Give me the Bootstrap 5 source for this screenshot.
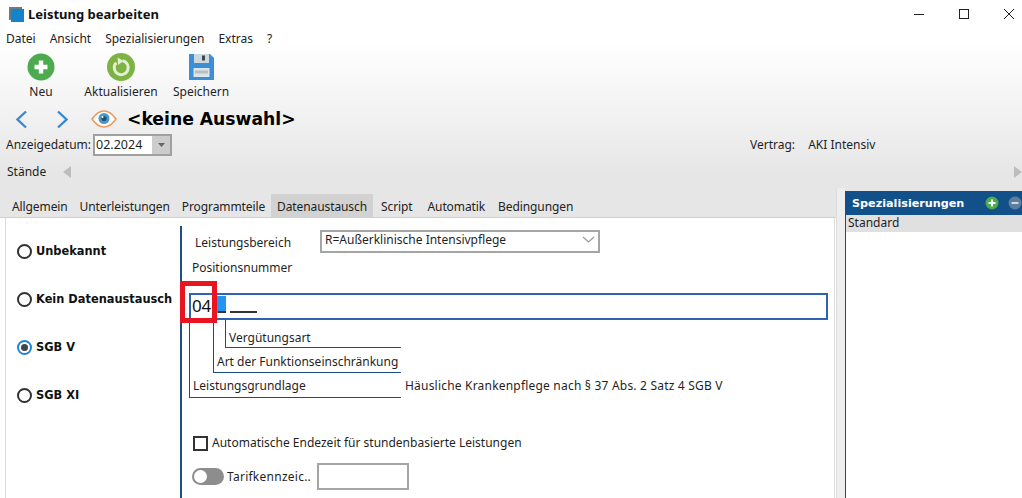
<!DOCTYPE html>
<html lang="de">
<head>
<meta charset="utf-8">
<title>Leistung bearbeiten</title>
<link href="https://cdn.jsdelivr.net/npm/bootstrap@5.3.0/dist/css/bootstrap.min.css" rel="stylesheet">
<style>
html,body{height:498px;overflow:hidden}
body{font-family:"Noto Sans","DejaVu Sans",sans-serif;font-size:12px;line-height:16px;color:#1f1f1f;background:#fff}
.appwin{width:1022px;height:498px;position:relative;overflow:hidden}
.chrome{height:218px;background:linear-gradient(#fff 0,#fff 42px,#e6e6e6 175px,#e6e6e6 100%);position:absolute;inset:0 0 auto 0}
.layer{position:relative}
.titlebar{height:27px;padding-left:9px}
.wintitle{font-weight:700;font-size:13px;margin-left:3px;color:#111}
.winbtns{margin-left:auto;gap:33px;padding-right:7px}
.menurow{height:24px;padding-left:6px;gap:14px;color:#222}
.toolrow{height:52px;padding-top:2px}
.toolitem{display:flex;flex-direction:column;align-items:center;gap:3px}
.ti1{width:70px;margin-left:6px}.ti2{width:88px;margin-left:1px}.ti3{width:62px;margin-left:5px}
.toolrow svg{display:block;height:28px}
.navrow{height:32px;padding-left:15px}
.nextarrow{margin-left:28px}
.eyeicon{margin-left:22px}
.heading{font-family:"DejaVu Sans",sans-serif;font-weight:700;font-size:17.2px;margin-left:10px;color:#000;line-height:24px}
.daterow{height:24px;padding-left:6px;margin-top:-2px}
.datebox{width:79px;height:22px;border:2px solid #a0a0a0;background:#fff;margin-left:2px;display:flex;align-items:center;padding-left:1px;font-size:12.5px}
.datearrow{margin-left:auto;width:18px;height:100%;background:#ccc;display:flex;align-items:center;justify-content:center}
.vertrag{margin-left:auto;width:272px}
.vertrag span:first-child{margin-right:10px}
.staenderow{height:34px;padding-left:7px;margin-top:-2px}
.leftpager{margin-left:17px}
.pagerow{position:absolute;left:0;right:0;top:194px;bottom:0;display:flex}
.leftside{width:835px;display:flex;flex-direction:column}
.tabstrip{height:24px;padding-left:6px;align-items:flex-end;border-bottom:1px solid #d0d0d0;letter-spacing:-.1px}
.tabitem{padding:0 6px;height:23px;line-height:26px;color:#222}
.tabsel{background:#d2d2d2;height:23px;padding:0 6px;line-height:25px}
.tabitem.tabgap1{padding-left:8px}
.tabitem.tabgap2{padding-left:9px}
.tabitem.tabgap3{padding-left:7px}
.tabpane{flex:1;background:#fff;margin-left:5px;display:flex;border-left:1px solid #ddd;border-right:1px solid #ddd}
.radios{flex:none;width:174px;padding:25px 0 0 11px;display:flex;flex-direction:column;gap:32px;font-family:"DejaVu Sans",sans-serif;font-weight:700;font-size:11.4px;color:#111}
.radioline{display:flex;align-items:center;gap:4px;height:16px;white-space:nowrap}
.rdot{width:15px;height:15px;border-radius:50%;border:2px solid #333;flex:none;display:flex;align-items:center;justify-content:center;background:#fff}
.rdot.active{border-color:#1a86d8}
.rdot.active::after{content:"";width:7px;height:7px;border-radius:50%;background:#444}
.formarea{flex:1;border-left:2px solid #1b4f80;margin-top:8px;padding-left:7px;position:relative}
.lineone{height:22px;margin-top:4px}
.lblone{margin-left:6px;width:125px;margin-top:4px}
.selbox{width:280px;height:23px;border:2px solid #a5a5a5;background:#fff;display:flex;align-items:center;padding-left:3px;padding-bottom:3px}
.selbox svg{margin-left:auto;margin-right:3px}
.lbltwo{margin:8px 0 0 3px}
.posinput{height:27px;border:2px solid #2f62b5;margin-top:17px;display:flex;align-items:flex-start;background:#fff;font-size:17px;line-height:22px;padding-left:1px;width:639px}
.seg1{font-size:17px;color:#111;width:25px;letter-spacing:-.3px}
.seg2{width:9px;height:17px;background:#2196f3;margin-top:1px}
.seg2u{width:8px;border-bottom:2px solid #333;height:18px;margin-left:-8px;position:relative}
.seg3{width:27px;height:18px;border-bottom:2px solid #333;margin-left:4px}
.treebox{width:212px;border-left:1px solid #1b4f80;border-bottom:1px solid #1b4f80}
.treebox .treebox{margin-left:auto}
.t2{width:188px}.t3{width:176px}
.treelabel{height:24px;line-height:26px;white-space:nowrap;padding-left:3px}
.t2 > .treelabel{line-height:28px}
.t3 > .treelabel{height:27px;line-height:36px}
.treerow{align-items:flex-end}
.grundlage{margin-left:4px;margin-bottom:4px;letter-spacing:.2px}
.checkline{margin-top:37px;margin-left:4px;gap:4px}
.ckbox{width:15px;height:15px;border:2px solid #333;background:#fff}
.switchline{margin-top:12px;margin-left:3px}
.togg{width:32px;height:17px;border-radius:9px;background:#8d8d8d;position:relative;margin-right:3px;flex:none}
.togg::after{content:"";position:absolute;left:2px;top:2px;width:13px;height:13px;border-radius:50%;background:#fff}
.tariflbl{letter-spacing:.25px}
.tarifbox{width:92px;height:27px;border:2px solid #a5a5a5;margin-left:6px;background:#fff}
.rightpanel{position:absolute;left:845px;top:191px;right:0;bottom:0;background:#fff}
.rphead{height:24px;background:#12508a;color:#fff;font-family:"DejaVu Sans",sans-serif;font-weight:700;font-size:11.2px;padding-left:7px}
.rphead span{margin-top:2px}
.rphead svg{flex:none}
.rpadd{margin-left:21px}.rpdel{margin-left:9px}
.rprow{height:17px;background:#e0e0e0;padding-left:2px;line-height:16px}
.rpbody{height:100%;border-left:1px solid #12508a}
.redmark{position:absolute;left:180px;top:281px;width:37px;height:42px;border:5px solid #e8141f;pointer-events:none}
.sideedge{position:absolute;left:836px;top:188px;width:9px;bottom:0;background:#eeeeee;border-left:1px solid #ddd}
</style>
</head>
<body>
<div class="appwin">
  <div class="chrome"></div>
  <div class="layer">
    <div class="titlebar d-flex align-items-center">
      <svg width="16" height="16" viewBox="0 0 16 16"><path d="M0 1h13v2H2v11H0z" fill="#6b7a85"/><rect x="2" y="3" width="13" height="13" fill="#1384c9"/></svg>
      <span class="wintitle">Leistung bearbeiten</span>
      <div class="winbtns d-flex align-items-center">
        <svg width="12" height="12" viewBox="0 0 12 12"><path d="M1 6.500h10" stroke="#222" stroke-width="1"/></svg>
        <svg width="12" height="12" viewBox="0 0 12 12"><rect x="1.500" y="1.500" width="9" height="9" fill="none" stroke="#222"/></svg>
        <svg width="12" height="12" viewBox="0 0 12 12"><path d="M1 1l10 10M11 1L1 11" stroke="#222" stroke-width="1"/></svg>
      </div>
    </div>
    <div class="menurow d-flex align-items-center"><span>Datei</span><span>Ansicht</span><span>Spezialisierungen</span><span>Extras</span><span>?</span></div>
    <div class="toolrow d-flex">
      <div class="toolitem ti1">
        <svg width="28" height="28" viewBox="0 0 28 28"><circle cx="14" cy="14" r="13.500" fill="#4dab4f"/><path d="M14 7.500v13M7.500 14h13" stroke="#fff" stroke-width="4.400"/></svg>
        <span>Neu</span>
      </div>
      <div class="toolitem ti2">
        <svg width="28" height="28" viewBox="0 0 28 28"><circle cx="14" cy="14" r="14" fill="#7cb342"/><path d="M9.200 9.800a7 7 0 1 0 6.500-2" fill="none" stroke="#e4efd3" stroke-width="3"/><path d="M10.600 4.600l6 3.400-5.600 4z" fill="#e4efd3"/></svg>
        <span>Aktualisieren</span>
      </div>
      <div class="toolitem ti3">
        <svg width="25" height="26" viewBox="0 0 25 26"><path d="M1 0h20l4 4v22H0V0z" fill="#3a8fd6"/><rect x="5" y="0" width="15" height="9" fill="#cfd8dc"/><rect x="13" y="1.500" width="3" height="5" fill="#37474f"/><rect x="4.500" y="14" width="16" height="9" fill="#dfe4e7"/><rect x="6" y="16.500" width="13" height="3" fill="#b7c0c5"/></svg>
        <span>Speichern</span>
      </div>
    </div>
    <div class="navrow d-flex align-items-center">
      <svg width="13" height="19" viewBox="0 0 13 19"><path d="M11 1.500L2.500 9.500l8.500 8" fill="none" stroke="#3b88cf" stroke-width="2.400"/></svg>
      <svg class="nextarrow" width="13" height="19" viewBox="0 0 13 19"><path d="M2 1.500l8.500 8-8.500 8" fill="none" stroke="#3b88cf" stroke-width="2.400"/></svg>
      <svg class="eyeicon" width="26" height="18" viewBox="0 0 26 18"><path d="M1 9C6 2 10 1 13 1s7 1 12 8c-5 7-9 8-12 8S6 16 1 9z" fill="#fff" stroke="#ef9a5a" stroke-width="1.600"/><circle cx="13" cy="8.500" r="5.500" fill="#4a97c9"/><circle cx="13" cy="8.500" r="2.600" fill="#24506f"/><circle cx="11.500" cy="7" r="1" fill="#fff"/></svg>
      <span class="heading">&lt;keine Auswahl&gt;</span>
    </div>
    <div class="daterow d-flex align-items-center">
      <span>Anzeigedatum:</span>
      <div class="datebox"><span>02.2024</span><div class="datearrow"><svg width="7" height="4" viewBox="0 0 7 4"><path d="M0 0h7L3.500 4z" fill="#666"/></svg></div></div>
      <div class="vertrag"><span>Vertrag:</span> <span>AKI Intensiv</span></div>
    </div>
    <div class="staenderow d-flex align-items-center">
      <span>Stände</span>
      <svg class="leftpager" width="8" height="12" viewBox="0 0 8 12"><path d="M8 0v12L0 6z" fill="#bdbdbd"/></svg>
      <svg class="ms-auto" width="8" height="12" viewBox="0 0 8 12"><path d="M0 0v12l8-6z" fill="#bdbdbd"/></svg>
    </div>
  </div>
  <div class="pagerow">
    <div class="leftside">
      <div class="tabstrip d-flex">
        <span class="tabitem">Allgemein</span><span class="tabitem">Unterleistungen</span><span class="tabitem">Programmteile</span><span class="tabsel">Datenaustausch</span><span class="tabitem tabgap1">Script</span><span class="tabitem tabgap2">Automatik</span><span class="tabitem tabgap3">Bedingungen</span>
      </div>
      <div class="tabpane">
        <div class="radios">
          <div class="radioline"><span class="rdot"></span>Unbekannt</div>
          <div class="radioline"><span class="rdot"></span>Kein Datenaustausch</div>
          <div class="radioline"><span class="rdot active"></span>SGB V</div>
          <div class="radioline"><span class="rdot"></span>SGB XI</div>
        </div>
        <div class="formarea">
          <div class="lineone d-flex align-items-center"><span class="lblone">Leistungsbereich</span>
            <div class="selbox"><span>R=Außerklinische Intensivpflege</span><svg width="13" height="7" viewBox="0 0 13 7"><path d="M1 1l5.500 5L12 1" fill="none" stroke="#9a9a9a" stroke-width="1.200"/></svg></div>
          </div>
          <div class="lbltwo">Positionsnummer</div>
          <div class="posinput"><span class="seg1">04</span><span class="seg2"></span><span class="seg2u"></span><span class="seg3"></span></div>
          <div class="d-flex treerow">
            <div class="treebox t1">
              <div class="treebox t2">
                <div class="treebox t3"><div class="treelabel">Vergütungsart</div></div>
                <div class="treelabel">Art der Funktionseinschränkung</div>
              </div>
              <div class="treelabel">Leistungsgrundlage</div>
            </div>
            <div class="grundlage">Häusliche Krankenpflege nach § 37 Abs. 2 Satz 4 SGB V</div>
          </div>
          <div class="checkline d-flex align-items-center"><span class="ckbox"></span><span>Automatische Endezeit für stundenbasierte Leistungen</span></div>
          <div class="switchline d-flex align-items-center"><span class="togg"></span><span class="tariflbl">Tarifkennzeic..</span><span class="tarifbox"></span></div>
        </div>
      </div>
    </div>
  </div>
  <div class="sideedge"></div>
  <div class="rightpanel">
    <div class="rphead d-flex align-items-center"><span>Spezialisierungen</span>
      <svg class="rpadd" width="14" height="14" viewBox="0 0 14 14"><circle cx="7" cy="7" r="6.500" fill="#4dab4f"/><path d="M7 3.500v7M3.500 7h7" stroke="#fff" stroke-width="2"/></svg>
      <svg class="rpdel" width="14" height="14" viewBox="0 0 14 14"><circle cx="7" cy="7" r="6.500" fill="#5d7f9e"/><path d="M3.500 7h7" stroke="#cfd8df" stroke-width="2"/></svg>
    </div>
    <div class="rpbody"><div class="rprow">Standard</div></div>
  </div>
  <div class="redmark"></div>
</div>
<script src="https://cdn.jsdelivr.net/npm/bootstrap@5.3.0/dist/js/bootstrap.bundle.min.js"></script>
</body>
</html>
